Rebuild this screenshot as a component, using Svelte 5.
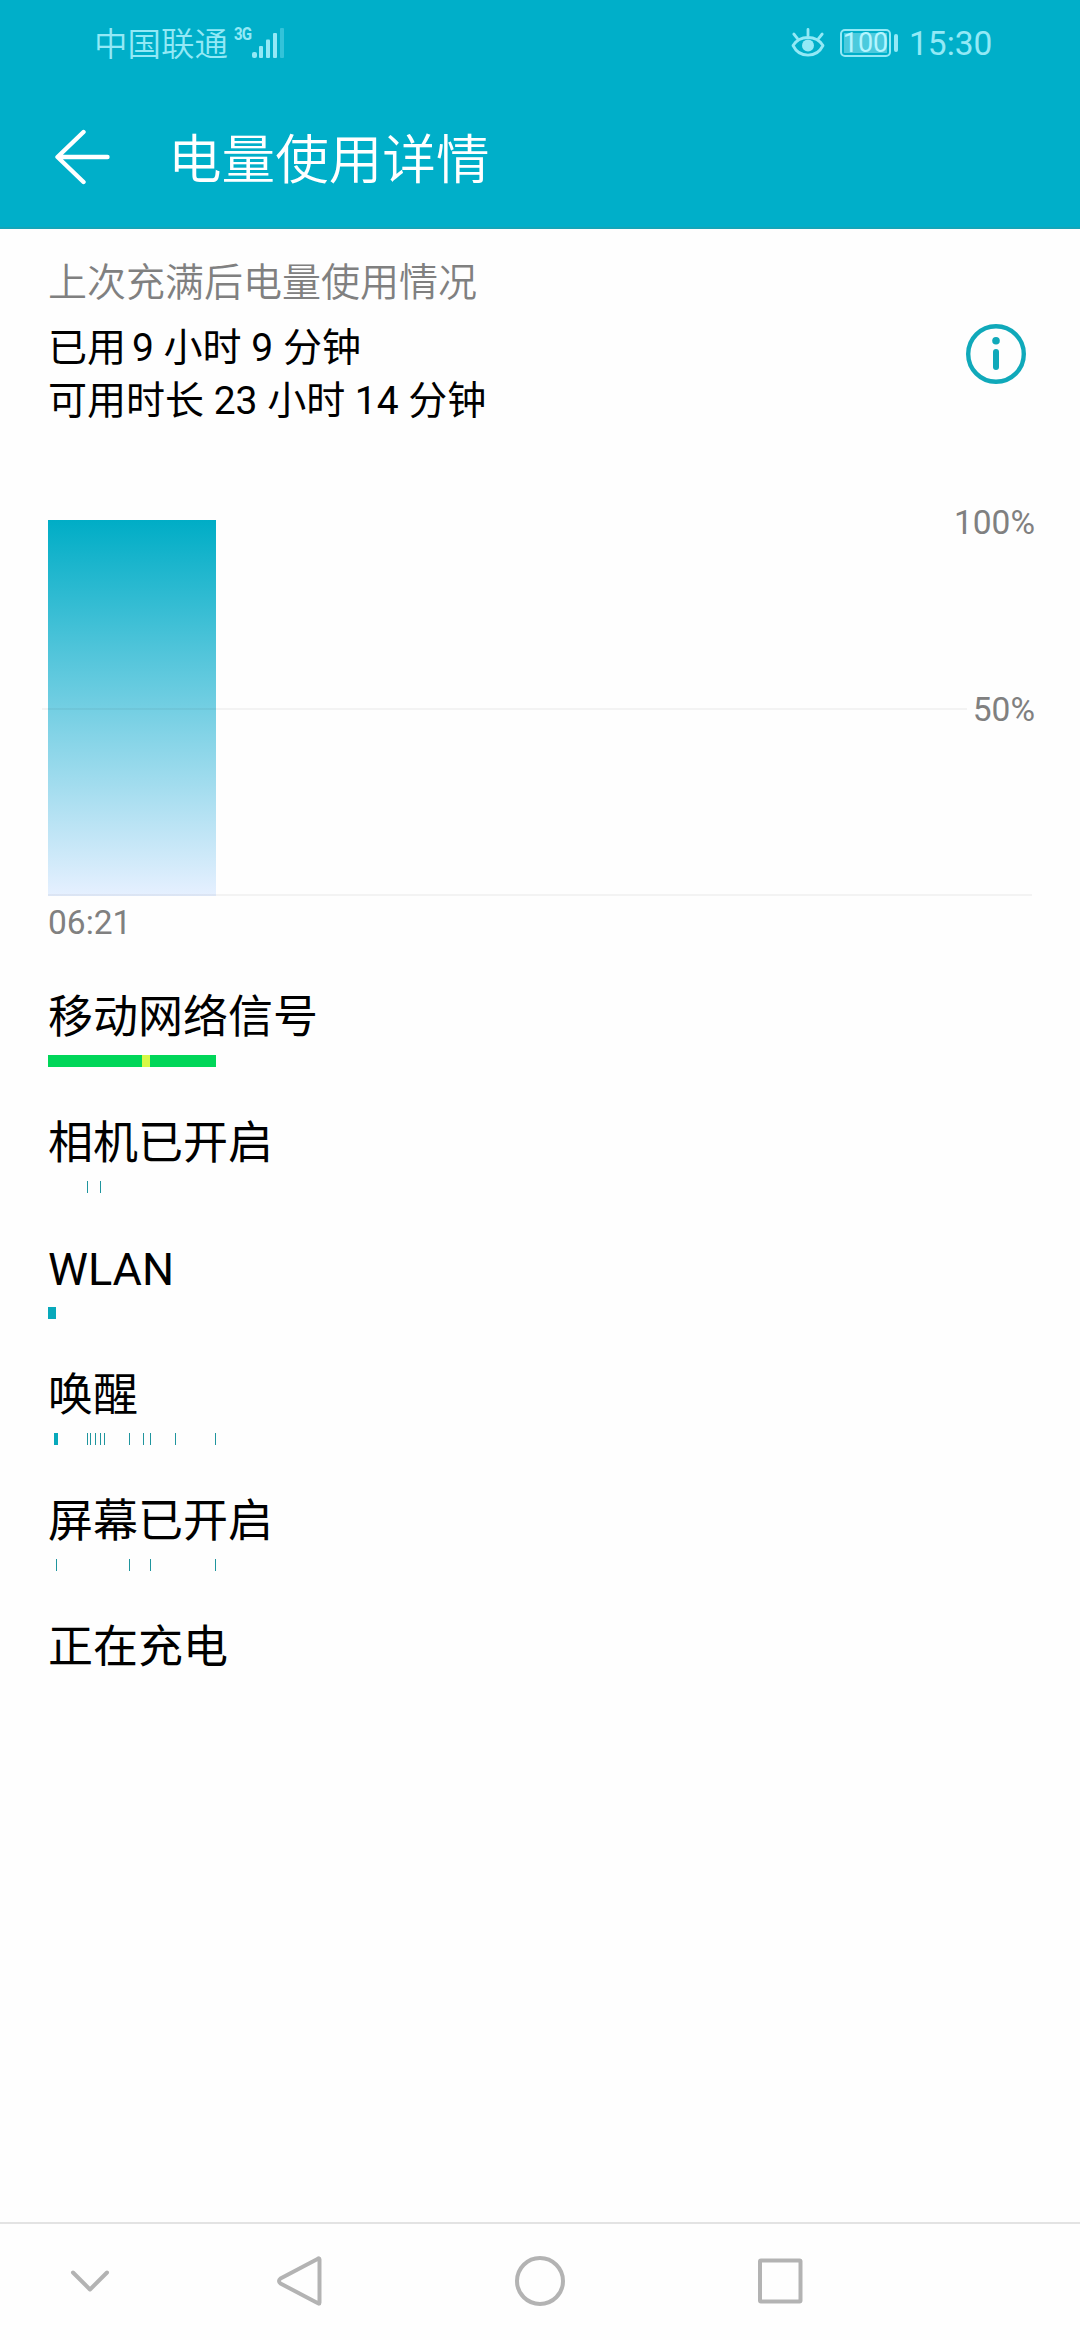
<script lang="ts">
  type Segment = { start: number; width: number; tone?: 'good' | 'weak' | 'brief' }

  const activities: { label: string; segments: Segment[] }[] = [
    {
      label: '移动网络信号',
      segments: [
        { start: 0, width: 168, tone: 'good' },
        { start: 94, width: 8, tone: 'weak' },
      ],
    },
    { label: '相机已开启', segments: ticks(39, 52) },
    { label: 'WLAN', segments: [{ start: 0, width: 8 }] },
    {
      label: '唤醒',
      segments: [
        { start: 6, width: 4 },
        ...ticks(39, 42, 47, 52, 56, 81, 95, 102, 127, 167),
      ],
    },
    { label: '屏幕已开启', segments: ticks(8, 81, 102, 167) },
    { label: '正在充电', segments: [] },
  ]

  function ticks(...starts: number[]): Segment[] {
    return starts.map((start) => ({ start, width: 1, tone: 'brief' }))
  }
</script>

<div class="screen">
  <header>
    <div class="status-bar">
      <span class="carrier">中国联通</span>
      <span class="network">3G</span>
      <svg class="signal" width="33" height="32" viewBox="0 0 33 32">
        <rect x="0" y="25" width="5" height="6" rx="2" />
        <rect x="7" y="19" width="4" height="12" rx="1" />
        <rect x="14" y="12.5" width="4" height="18.5" rx="1" />
        <rect x="21" y="6" width="4" height="25" rx="1" />
        <rect x="28" y="1" width="4" height="30" rx="1" opacity="0.35" />
      </svg>
      <svg class="eye" width="34" height="32" viewBox="0 0 34 32">
        <g fill="none" stroke="currentColor" stroke-width="2.8" stroke-linecap="round">
          <path d="M2 18.5C5.5 13 11 10.5 17 10.5S28.5 13 32 18.5C28.5 25.5 23 28.2 17 28.2S5.5 25.5 2 18.5Z" stroke-linejoin="round" />
          <path d="M17 2.5v6M2.8 7l3.7 4.6M31.2 7l-3.7 4.6" />
        </g>
        <circle cx="17" cy="18.5" r="6" fill="currentColor" />
      </svg>
      <div class="battery">
        <span class="battery-level">100</span>
      </div>
      <span class="clock">15:30</span>
    </div>
    <div class="title-bar">
      <svg width="56" height="56" viewBox="0 0 56 56">
        <path d="M28.5 3L2.5 28L28.5 53M3 28H52.5" fill="none" stroke="currentColor" stroke-width="4.4" stroke-linecap="round" stroke-linejoin="round" />
      </svg>
      <h1>电量使用详情</h1>
    </div>
  </header>

  <main>
    <section class="summary">
      <div>
        <p class="caption">上次充满后电量使用情况</p>
        <p>已用<span class="hours">9</span> 小时 9 分钟</p>
        <p>可用时长 23 小时 14 分钟</p>
      </div>
      <svg class="info" width="60" height="60" viewBox="0 0 60 60">
        <circle cx="30" cy="30" r="27.8" fill="none" stroke="currentColor" stroke-width="4.4" />
        <circle cx="30" cy="16.8" r="3.8" fill="currentColor" />
        <path d="M30 28v15" stroke="currentColor" stroke-width="6" stroke-linecap="round" />
      </svg>
    </section>

    <section class="chart">
      <div class="level"></div>
      <div class="axis">
        <span>100%</span>
        <span class="half">50%</span>
      </div>
    </section>
    <div class="start-time">06:21</div>

    <ul>
      {#each activities as { label, segments }}
        <li>
          <h2>{label}</h2>
          <svg width="984" height="12" shape-rendering="crispEdges">
            {#each segments as { start, width, tone }}
              <rect class={tone} x={start} {width} height="12" />
            {/each}
          </svg>
        </li>
      {/each}
    </ul>
  </main>

  <nav>
    <svg class="collapse" viewBox="0 0 60 60"><path d="M13 21.5L30 38.5L47 21.5" /></svg>
    <svg viewBox="0 0 60 60"><path d="M49.5 8.5V51.5Q49.5 53.5 47.5 52L10.5 32.5Q7.5 30 10.5 27.5L47.5 8Q49.5 6.5 49.5 8.5Z" /></svg>
    <svg viewBox="0 0 60 60"><circle cx="30" cy="30" r="23" /></svg>
    <svg viewBox="0 0 60 60"><rect x="10" y="9.5" width="40.5" height="41" rx="1" /></svg>
  </nav>
</div>

<style>
  :global(body) {
    background: #fefefe;
  }

  .screen {
    display: flex;
    flex-direction: column;
    width: 1080px;
    height: 2340px;
    overflow: hidden;
    color: #000;
    font-family: Roboto, 'Noto Sans CJK SC', sans-serif;
  }

  h1,
  h2,
  p,
  ul {
    margin: 0;
    padding: 0;
    font-weight: 400;
  }
  svg {
    display: block;
    flex-shrink: 0;
  }

  header {
    box-sizing: border-box;
    height: 229px;
    background: #00afc9;
    border-bottom: 2px solid #13a5b8;
  }

  .status-bar {
    display: flex;
    align-items: center;
    height: 86px;
    padding: 0 88px 0 94px;
    color: #93e9f6;
  }
  .carrier {
    margin-top: 3px;
    font-size: 33.5px;
    font-weight: 350;
    line-height: 50px;
  }
  .network {
    align-self: flex-start;
    width: 17px;
    margin: 23px 1px 0 6px;
    font-size: 18px;
    font-weight: 700;
    line-height: 22px;
    letter-spacing: -1px;
    transform: scaleX(0.84);
    transform-origin: left;
  }
  .signal {
    fill: currentColor;
  }
  .eye {
    margin: 0 15px 0 auto;
  }
  .battery {
    position: relative;
    box-sizing: border-box;
    width: 51px;
    height: 28px;
    padding: 2px;
    border: 2px solid currentColor;
    border-radius: 5px;
  }
  .battery::after {
    content: '';
    position: absolute;
    top: 3px;
    right: -9px;
    width: 4px;
    height: 18px;
    border-radius: 2px;
    background: currentColor;
  }
  .battery-level {
    display: flex;
    justify-content: center;
    height: 20px;
    background: #4bcadd;
    color: #b4f5ff;
    font-size: 27px;
    line-height: 21px;
  }
  .clock {
    width: 83px;
    margin: 2px 0 0 18px;
    font-size: 33.5px;
    line-height: 50px;
    text-align: right;
  }

  .title-bar {
    display: flex;
    align-items: center;
    height: 143px;
    padding: 0 55px;
    color: #fff;
  }
  .title-bar svg {
    margin-bottom: 1px;
  }
  .title-bar h1 {
    margin: 6px 0 0 57px;
    font-size: 53.6px;
    font-weight: 350;
    line-height: 80px;
  }

  main {
    flex: 1;
    padding: 0 46px 0 48px;
  }

  .summary {
    display: flex;
    align-items: center;
    justify-content: space-between;
    height: 202px;
    padding-top: 24px;
    box-sizing: border-box;
  }
  .summary p {
    font-size: 39px;
    line-height: 53px;
  }
  .summary .caption {
    margin-bottom: 12px;
    color: #808080;
    font-weight: 350;
  }
  .hours {
    margin-left: 6px;
  }
  .info {
    margin: 24px 8px 0 0;
    color: #10a9ba;
  }

  .chart {
    position: relative;
    display: flex;
    justify-content: space-between;
    box-sizing: border-box;
    height: 376px;
    margin-top: 89px;
  }
  .chart::before,
  .chart::after {
    content: '';
    position: absolute;
    left: 0;
    height: 2px;
    background: rgba(0, 0, 0, 0.043);
  }
  .chart::before {
    top: 188px;
    left: -6px;
    width: 925px;
  }
  .chart::after {
    bottom: 0;
    width: 984px;
  }
  .level {
    width: 168px;
    background: linear-gradient(#00adc6, #e6f0ff);
  }
  .axis {
    display: flex;
    flex-direction: column;
    align-items: flex-end;
    margin-right: -1px;
    color: #808080;
    font-size: 33.5px;
    line-height: 40px;
  }
  .axis span {
    margin-top: -17px;
  }
  .axis .half {
    margin-top: 147px;
  }

  .start-time {
    color: #808080;
    font-size: 33.5px;
    line-height: 40px;
    height: 92px;
    padding-top: 7px;
    box-sizing: border-box;
  }

  ul {
    list-style: none;
  }
  li {
    height: 126px;
  }
  h2 {
    margin-bottom: 7px;
    font-size: 45px;
    line-height: 60px;
  }
  li rect {
    fill: #08a9bb;
  }
  li rect.good {
    fill: #00d659;
  }
  li rect.weak {
    fill: #d7f946;
  }
  li rect.brief {
    fill: #1f959e;
  }

  nav {
    display: flex;
    align-items: center;
    gap: 180px;
    box-sizing: border-box;
    height: 118px;
    padding: 0 0 2px 60px;
    border-top: 2px solid #e3e3e3;
  }
  nav svg {
    width: 60px;
    height: 60px;
    fill: none;
    stroke: #b3b3b3;
    stroke-width: 4;
    stroke-linecap: round;
    stroke-linejoin: round;
  }
  nav .collapse {
    margin-right: -30px;
  }
</style>
